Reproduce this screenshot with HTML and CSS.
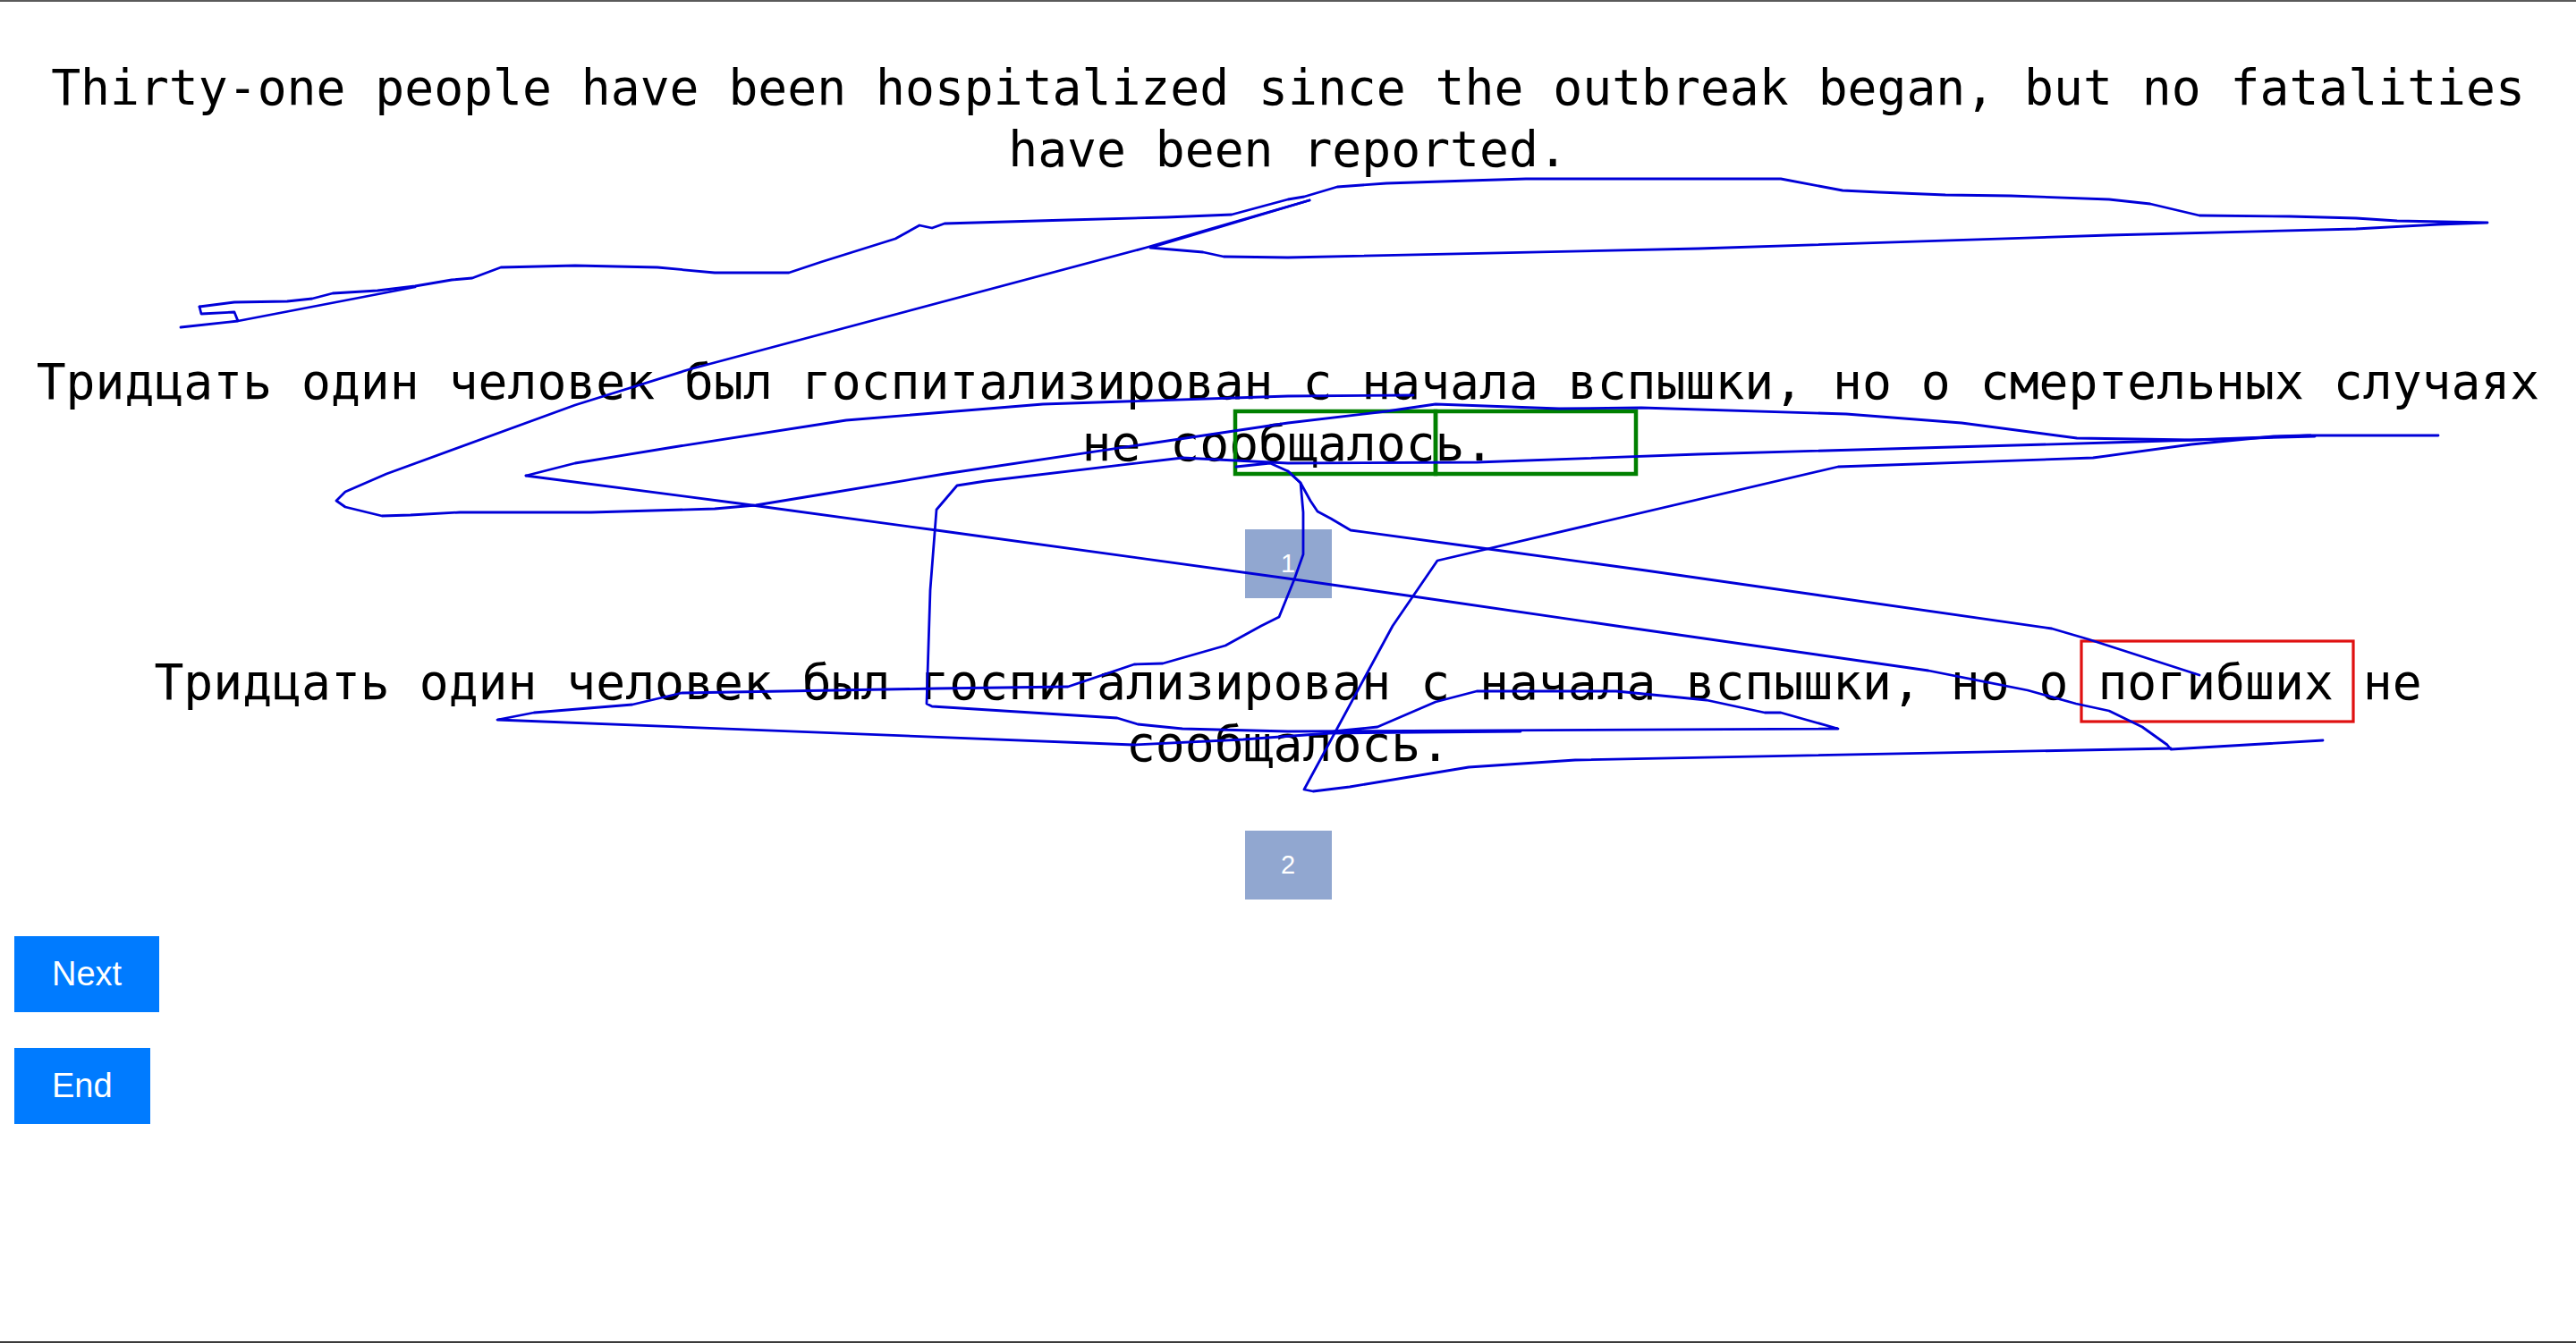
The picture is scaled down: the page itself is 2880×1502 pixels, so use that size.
FILE: index.html
```html
<!DOCTYPE html>
<html lang="en">
<head>
<meta charset="utf-8">
<title>Translation review</title>
<link rel="stylesheet" href="styles.css">
</head>
<body>
<div class="frame">
  <main class="stack">
    <p class="sentence source">Thirty-one people have been hospitalized since the outbreak began, but no fatalities have been reported.</p>
    <p class="sentence first">Тридцать один человек был госпитализирован с начала вспышки, но о смертельных случаях не сообщалось.</p>
    <div class="badge">1</div>
    <p class="sentence second">Тридцать один человек был госпитализирован с начала вспышки, но о погибших не сообщалось.</p>
    <div class="badge badge-two">2</div>
    <div class="actions">
      <button class="btn">Next</button>
      <button class="btn">End</button>
    </div>
  </main>
</div>
<svg class="ink" width="2880" height="1502" viewBox="0 0 2880 1502" xmlns="http://www.w3.org/2000/svg">
  <g class="marks">
    <rect x="1381" y="460" width="224" height="70" fill="none" stroke="#008000" stroke-width="4.5"/>
    <rect x="1605" y="460" width="224" height="70" fill="none" stroke="#008000" stroke-width="4.5"/>
    <rect x="2327" y="717" width="304" height="90" fill="none" stroke="#e01010" stroke-width="3.2"/>
  </g>
  <g class="strokes" fill="none" stroke="#0000d8" stroke-width="2.8" stroke-linejoin="round" stroke-linecap="round">
    <polyline points="223,343 262,338 321,337 349,334 372,328 422,325 464,320 505,313 528,311 560,299 643,297 735,299 799,305 882,305 918,293 1001,267 1028,252 1042,255 1056,250 1194,246 1304,243 1377,240 1414,230 1440,223 1458,220 1495,209 1550,205 1642,202 1706,200 1991,200 2060,213 2101,215 2175,218 2248,219 2358,223 2404,228 2459,241 2560,242 2634,244 2680,247 2781,249 2726,251 2634,256 2358,263 1899,278 1440,288 1368,287 1345,282 1286,277 1464,224"/>
    <polyline points="223,343 225,351 262,349 266,359 202,366 266,359 464,321"/>
    <polyline points="1464,224 1281,277 771,413 643,453 432,530 386,550 376,560 386,567 427,577 459,576 514,573 661,573 799,569 845,565 918,553 1056,530 1440,473 1550,460 1605,452 1743,457 1835,456 2064,463 2193,473 2322,490 2450,492 2583,487"/>
    <polyline points="588,532 643,518 753,500 946,470 1166,452 1440,443 1580,442"/>
    <polyline points="2588,488 2358,495 1899,508 1651,517 1440,518 1322,512 1102,538 1070,543 1047,570 1040,660 1036,787 1042,790 1249,803 1272,810 1322,815 1440,818 2055,815 1991,797 1973,797 1908,783 1807,773 1651,773 1605,785 1540,813 1490,818"/>
    <polyline points="1382,522 1420,518 1440,527 1454,540 1465,560 1473,572 1488,580 1510,593 1657,613 1840,638 2294,703 2335,715 2459,755"/>
    <polyline points="1440,527 1454,540 1457,573 1457,620 1447,648 1430,690 1410,700 1370,722 1300,742 1268,743 1194,768 1047,770 762,775 707,788 597,797 556,805 1267,833 1390,827 1487,820 1700,818"/>
    <polyline points="588,532 826,563 1047,593 1440,647 1580,667 1807,700 2156,750 2267,772 2321,787 2358,795 2395,813 2423,833 2427,838 2597,828"/>
    <polyline points="2427,837 1761,850 1642,858 1509,880 1468,885 1458,883 1557,700 1607,627 2055,522 2340,512 2450,497 2542,488 2579,487 2726,487"/>
  </g>
</svg>
</body>
</html>
```

FILE: styles.css
```css
html, body {
  margin: 0;
  padding: 0;
  background: #ffffff;
}

body {
  position: relative;
  width: 2880px;
  height: 1502px;
  overflow: hidden;
  color: #000000;
}

.frame {
  box-sizing: border-box;
  height: 1502px;
  border-top: 2px solid #5a5a5a;
  border-bottom: 2px solid #3c3c3c;
}

.stack {
  display: flex;
  flex-direction: column;
  align-items: center;
  padding: 0 8px;
}

.sentence {
  align-self: stretch;
  margin: 0;
  text-align: center;
  font-family: "DejaVu Sans Mono", "Liberation Mono", monospace;
  font-size: 54.7px;
  line-height: 69px;
  color: #000000;
}

.source {
  margin-top: 62px;
}

.first {
  margin-top: 191px;
}

.second {
  margin-top: 60px;
}

.badge {
  margin-top: 61px;
  width: 97px;
  height: 77px;
  display: flex;
  align-items: center;
  justify-content: center;
  background: #91a7d0;
  color: #ffffff;
  font-family: "Liberation Sans", Arial, sans-serif;
  font-size: 29px;
}

.badge-two {
  margin-top: 62px;
}

.actions {
  align-self: stretch;
  display: flex;
  flex-direction: column;
  align-items: flex-start;
  gap: 40px;
  margin-top: 41px;
  padding-left: 8px;
}

.btn {
  margin: 0;
  border: none;
  border-radius: 0;
  background: #007bff;
  color: #ffffff;
  font-family: "Liberation Sans", Arial, sans-serif;
  font-size: 38px;
  line-height: 45px;
  padding: 20px 42px;
  cursor: pointer;
}

.ink {
  position: absolute;
  top: 0;
  left: 0;
  pointer-events: none;
}
```
